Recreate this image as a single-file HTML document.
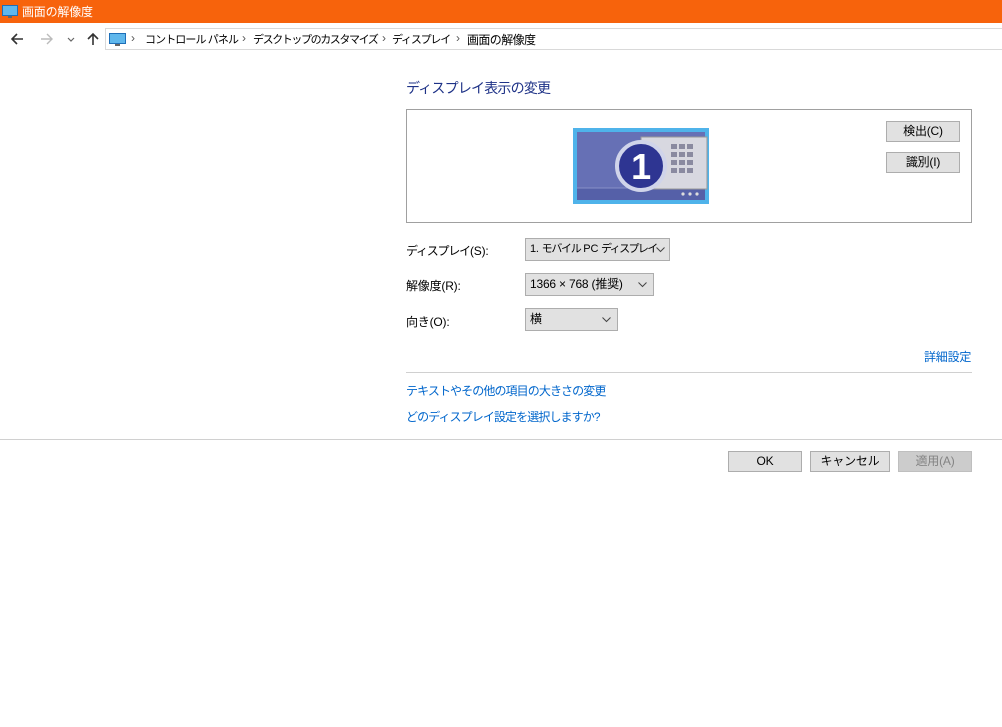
<!DOCTYPE html><html><head><meta charset="utf-8"><style>
body{margin:0;width:1002px;height:727px;background:#fff;font-family:"Liberation Sans","Noto Sans CJK JP",sans-serif;font-size:12px;color:#000;position:relative;overflow:hidden;letter-spacing:-0.2px}
.a{position:absolute;white-space:nowrap}
.btn{position:absolute;background:#e1e1e1;border:1px solid #adadad;box-sizing:border-box;text-align:center;font-size:12px}
.sel{position:absolute;background:#e1e1e1;border:1px solid #adadad;box-sizing:border-box;font-size:12px;padding-left:4px;line-height:20px;white-space:nowrap;overflow:hidden}
.sel svg{position:absolute;right:6px;top:8px}
a{color:#0066cc;text-decoration:none}
.g{color:#555;z-index:2;background:#fff;padding:0 2px}
.j{letter-spacing:-1.2px}
</style></head><body>
<div class="a" style="left:0;top:0;width:1002px;height:23px;background:#f7630c"></div>
<svg class="a" style="left:2px;top:5px" width="16" height="14"><rect x="0.5" y="0.5" width="15" height="10" fill="#5fb7ec" stroke="#1e6fb8"/><rect x="6" y="11" width="4" height="2" fill="#666"/></svg>
<div class="a" style="left:22px;top:3px;color:#fff;font-size:12px">画面の解像度</div>
<svg class="a" style="left:10px;top:32px" width="14" height="14"><path d="M13 7H2M7 2L2 7L7 12" fill="none" stroke="#333" stroke-width="1.6"/></svg>
<svg class="a" style="left:40px;top:32px" width="14" height="14"><path d="M1 7H12M7 2L12 7L7 12" fill="none" stroke="#bbb" stroke-width="1.4"/></svg>
<svg class="a" style="left:67px;top:37px" width="8" height="5"><path d="M1 1L4 4L7 1" fill="none" stroke="#666" stroke-width="1.2"/></svg>
<svg class="a" style="left:86px;top:32px" width="14" height="14"><path d="M7 13V2M2 7L7 2L12 7" fill="none" stroke="#333" stroke-width="1.6"/></svg>
<div class="a" style="left:105px;top:28px;width:897px;height:22px;border:1px solid #d9d9d9;border-right:none;box-sizing:border-box"></div>
<svg class="a" style="left:109px;top:33px" width="17" height="14"><rect x="0.5" y="0.5" width="16" height="10" fill="#5fb7ec" stroke="#1e6fb8"/><rect x="6" y="11" width="5" height="2" fill="#666"/></svg>
<div class="a" style="left:145px;top:31px;font-size:11px;letter-spacing:-0.9px">コントロール パネル</div>
<div class="a" style="left:253px;top:31px;font-size:11px;letter-spacing:-1.4px">デスクトップのカスタマイズ</div>
<div class="a" style="left:392px;top:31px;font-size:11px;letter-spacing:-1.2px">ディスプレイ</div>
<div class="a" style="left:467px;top:31px;letter-spacing:-0.6px">画面の解像度</div>
<div class="a g" style="left:129px;top:31px">›</div>
<div class="a g" style="left:240px;top:31px">›</div>
<div class="a g" style="left:380px;top:31px">›</div>
<div class="a g" style="left:454px;top:31px">›</div>
<div class="a" style="left:406px;top:78px;color:#1e3287;font-size:14px;letter-spacing:-0.8px">ディスプレイ表示の変更</div>
<div class="a" style="left:406px;top:109px;width:566px;height:114px;border:1px solid #a0a0a0;box-sizing:border-box"></div>
<svg class="a" style="left:573px;top:128px" width="136" height="76">
<rect x="0" y="0" width="136" height="76" fill="#4fb3ea"/>
<rect x="4" y="4" width="128" height="68" fill="#6670b5"/>
<rect x="4" y="60" width="128" height="12" fill="#5560a8"/>
<line x1="4" y1="60" x2="132" y2="60" stroke="#8890c8"/>
<circle cx="110" cy="66" r="1.6" fill="#ddd"/><circle cx="117" cy="66" r="1.6" fill="#ddd"/><circle cx="124" cy="66" r="1.6" fill="#ddd"/>
<rect x="68" y="9" width="66" height="52" fill="#d8d8e0" stroke="#999"/>
<g fill="#8a8aa0"><rect x="98" y="16" width="6" height="5"/><rect x="106" y="16" width="6" height="5"/><rect x="114" y="16" width="6" height="5"/><rect x="98" y="24" width="6" height="5"/><rect x="106" y="24" width="6" height="5"/><rect x="114" y="24" width="6" height="5"/><rect x="98" y="32" width="6" height="5"/><rect x="106" y="32" width="6" height="5"/><rect x="114" y="32" width="6" height="5"/><rect x="98" y="40" width="6" height="5"/><rect x="106" y="40" width="6" height="5"/><rect x="114" y="40" width="6" height="5"/></g>
<circle cx="68" cy="38" r="24" fill="#2e3592" stroke="#d0d4ea" stroke-width="4"/>
<text x="68" y="51" text-anchor="middle" font-family="Liberation Sans" font-weight="bold" font-size="36" fill="#fff">1</text>
</svg>
<div class="btn" style="left:886px;top:121px;width:74px;height:21px;line-height:19px">検出(C)</div>
<div class="btn" style="left:886px;top:152px;width:74px;height:21px;line-height:19px">識別(I)</div>
<div class="a" style="left:406px;top:242px"><span class="j">ディスプレイ</span>(S):</div>
<div class="sel" style="left:525px;top:238px;width:145px;height:23px;font-size:11px">1. <span style="letter-spacing:-1.3px">モバイル</span> PC <span style="letter-spacing:-1.6px">ディスプレイ</span><svg width="9" height="6" style="right:4px"><path d="M0.5 0.5L4.5 4.5L8.5 0.5" fill="none" stroke="#444"/></svg></div>
<div class="a" style="left:406px;top:277px">解像度(R):</div>
<div class="sel" style="left:525px;top:273px;width:129px;height:23px">1366 × 768 (推奨)<svg width="9" height="6"><path d="M0.5 0.5L4.5 4.5L8.5 0.5" fill="none" stroke="#444"/></svg></div>
<div class="a" style="left:406px;top:313px">向き(O):</div>
<div class="sel" style="left:525px;top:308px;width:93px;height:23px">横<svg width="9" height="6"><path d="M0.5 0.5L4.5 4.5L8.5 0.5" fill="none" stroke="#444"/></svg></div>
<div class="a" style="left:924px;top:348px"><a>詳細設定</a></div>
<div class="a" style="left:406px;top:372px;width:566px;height:1px;background:#d0d0d0"></div>
<div class="a" style="left:406px;top:382px;letter-spacing:-0.9px"><a>テキストやその他の項目の大きさの変更</a></div>
<div class="a" style="left:406px;top:408px;letter-spacing:-0.9px"><a>どのディスプレイ設定を選択しますか?</a></div>
<div class="a" style="left:0;top:439px;width:1002px;height:1px;background:#d0d0d0"></div>
<div class="btn" style="left:728px;top:451px;width:74px;height:21px;line-height:19px">OK</div>
<div class="btn" style="left:810px;top:451px;width:80px;height:21px;line-height:19px">キャンセル</div>
<div class="btn" style="left:898px;top:451px;width:74px;height:21px;line-height:19px;background:#ccc;border-color:#bfbfbf;color:#838383">適用(A)</div>
</body></html>
